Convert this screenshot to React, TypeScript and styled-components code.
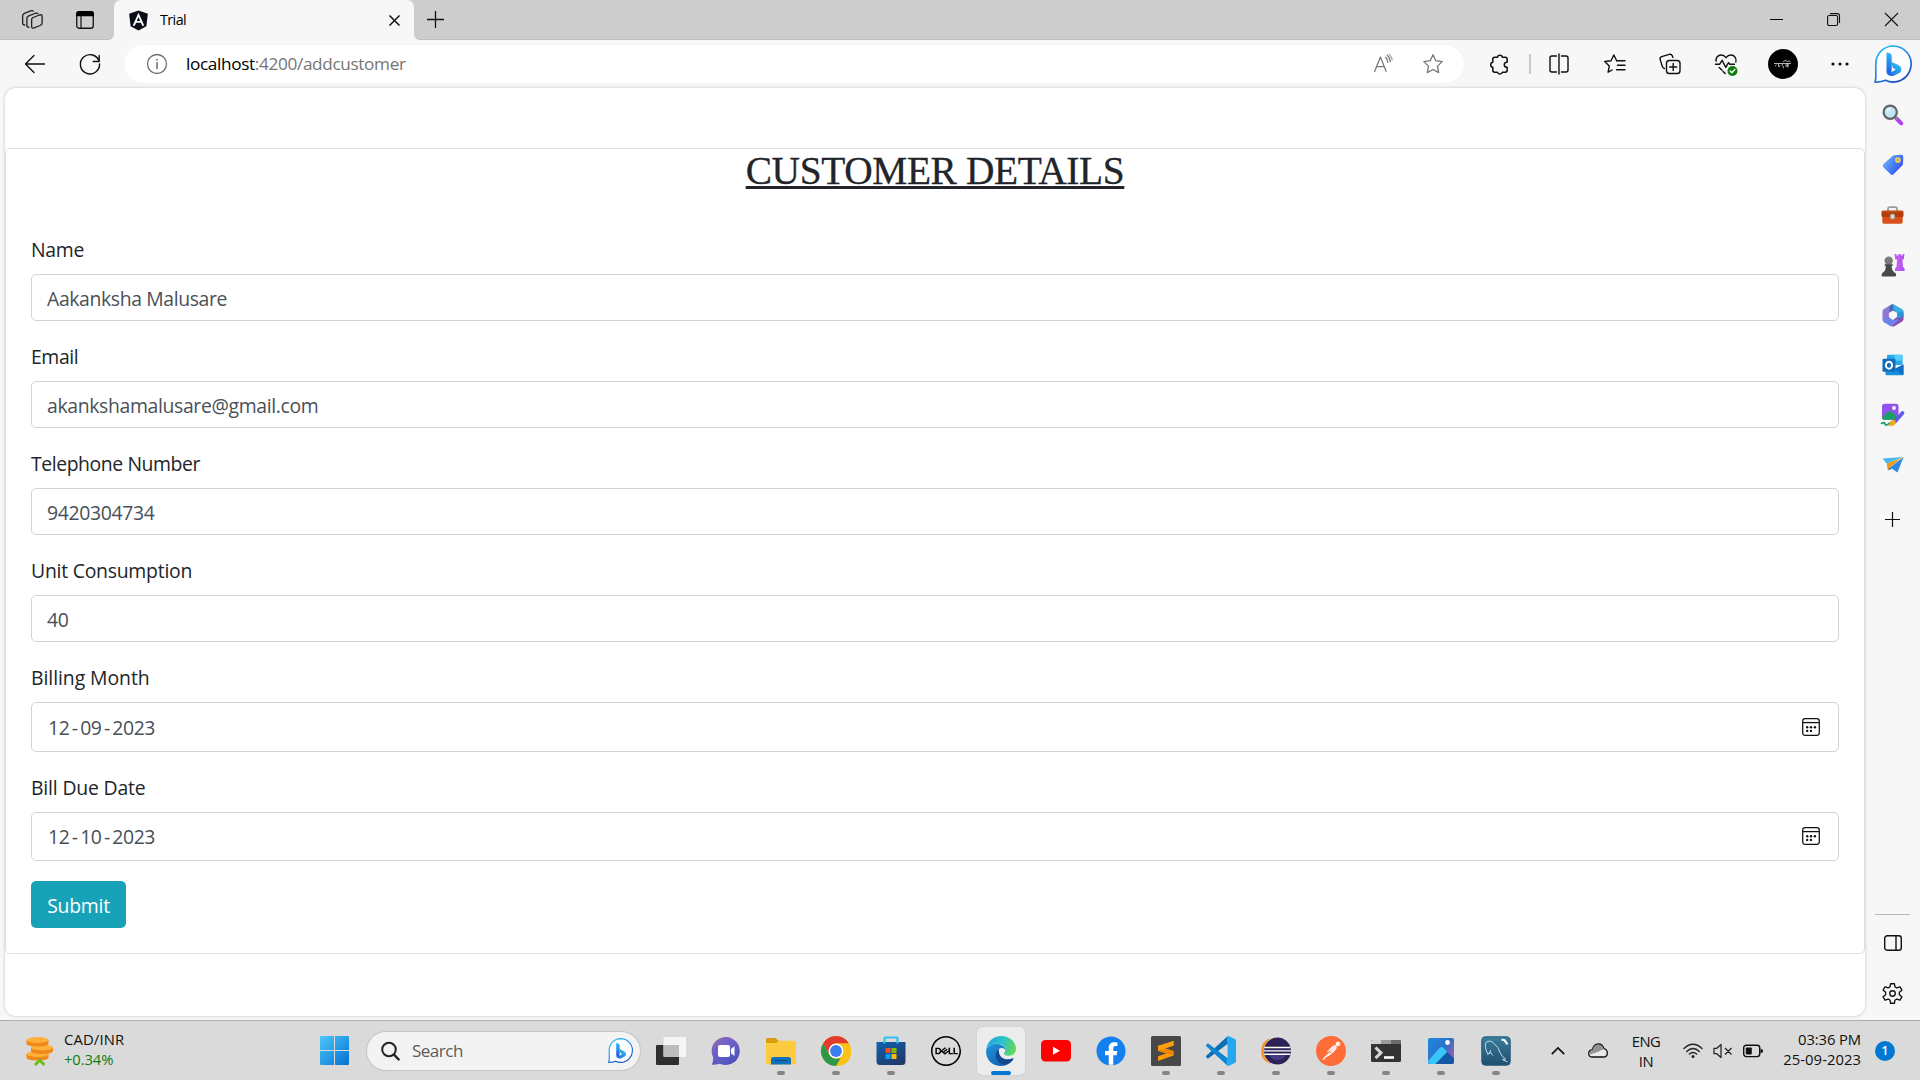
import React from "react";
import styled, { createGlobalStyle, css } from "styled-components";
import { FaAngular, FaFacebook } from "react-icons/fa";
import { SiDell, SiPostman } from "react-icons/si";

const GlobalStyle = createGlobalStyle`
  * { box-sizing: border-box; }
  html, body { margin: 0; padding: 0; overflow: hidden; }
  body { font-family: "Open Sans", "Noto Sans", sans-serif; color: #000; background: #f7f7f7; }
`;

/* ---------- window frame ---------- */

const Desktop = styled.div`
  width: 1920px;
  height: 1080px;
  display: flex;
  flex-direction: column;
  background: #f7f7f7;
  overflow: hidden;
`;

const TabStrip = styled.header`
  height: 40px;
  flex: none;
  display: flex;
  background: #f7f7f7;
`;

const StripPart = styled.div<{ $side: "left" | "right" }>`
  background: #cdcdcd;
  display: flex;
  align-items: center;
  border-bottom: 1px solid #bfbfbf;
  ${(p) =>
    p.$side === "left"
      ? css`width: 114px; padding-left: 17px; gap: 21px; border-bottom-right-radius: 6px;`
      : css`flex: 1; padding-left: 6px; border-bottom-left-radius: 6px;`}
`;

const StripSpacer = styled.div`
  flex: 1;
`;

const Caption = styled.div`
  width: 57.5px;
  height: 40px;
  display: grid;
  place-items: center;
`;

const TabBack = styled.div`
  width: 300px;
  background: #cdcdcd;
`;

const Tab = styled.div`
  width: 300px;
  height: 40px;
  display: flex;
  align-items: center;
  padding: 0 10px 0 13px;
  border-radius: 7px 7px 0 0;
  background: #f7f7f7;
`;

const TabIcon = styled.span`
  width: 22px;
  height: 22px;
  margin-right: 11px;
  color: #0b0d17;
  background: radial-gradient(circle at 50% 50%, #fff 0 6px, transparent 7px);
  display: grid;
  place-items: center;
`;

const TabTitle = styled.span`
  flex: 1;
  font-size: 14.4px;
  letter-spacing: -0.6px;
  line-height: 20px;
`;

const Slot = styled.div<{ $w?: number; $h?: number; $ml?: number }>`
  width: ${(p) => p.$w ?? 40}px;
  height: ${(p) => p.$h ?? 40}px;
  margin-left: ${(p) => p.$ml ?? 0}px;
  flex: none;
  display: grid;
  place-items: center;
`;

const Svg = styled.svg`
  display: block;
  overflow: visible;
`;

const Browser = styled.div`
  height: 980px;
  flex: none;
  display: flex;
`;

const Column = styled.div`
  width: 1865px;
  display: flex;
  flex-direction: column;
`;

const Toolbar = styled.div`
  height: 48px;
  flex: none;
  display: flex;
  align-items: center;
  padding-left: 15px;
`;

const AddressBar = styled.div`
  width: 1340px;
  height: 38px;
  margin-left: 14px;
  display: flex;
  align-items: center;
  padding: 0 6px 0 13px;
  border-radius: 19px;
  background: #fff;
  box-shadow: 0 0 2px rgba(0, 0, 0, 0.05);
`;

const Url = styled.span`
  flex: 1;
  margin-left: 9px;
  font-size: 17.2px;
  letter-spacing: -0.35px;
  line-height: 24px;
  color: #000;
  em { font-style: normal; color: #757575; }
`;

const Divider = styled.i`
  width: 1.5px;
  height: 20px;
  margin: 0 8.5px 0 10px;
  background: #cacaca;
`;

const Actions = styled.div`
  display: flex;
  align-items: center;
  gap: 15.5px;
`;

const Avatar = styled.div`
  width: 30px;
  height: 30px;
  border-radius: 50%;
  background: #000;
  display: grid;
  place-items: center;
`;

/* ---------- page ---------- */

const Page = styled.main`
  height: 928px;
  margin-left: 5px;
  width: 1860px;
  padding-top: 60px;
  border-radius: 11px;
  background: #fff;
  box-shadow: 0 0 3px rgba(0, 0, 0, 0.24);
`;

const Card = styled.section`
  height: 806px;
  border: 1px solid #dfdfdf;
  border-radius: 5px;
  background: #fff;
`;

const Heading = styled.h2`
  margin: 0;
  height: 85px;
  text-align: center;
  font-family: "Liberation Serif", serif;
  font-weight: 400;
  font-size: 39.4px;
  line-height: 44px;
  letter-spacing: -0.37px;
  color: #212529;
  text-decoration: underline;
  text-decoration-thickness: 3px;
  text-underline-offset: 2px;
  text-decoration-skip-ink: none;
  -webkit-text-stroke: 0.3px #212529;
`;

const Form = styled.form`
  padding: 0 25px;
`;

const Field = styled.div`
  display: flex;
  flex-direction: column;
  margin-bottom: 20px;
`;

const Label = styled.label<{ $ls?: number }>`
  height: 30px;
  margin-bottom: 10px;
  font-size: 19.4px;
  line-height: 31px;
  letter-spacing: ${(p) => p.$ls ?? -0.3}px;
  color: #212529;
`;

const controlStyle = css`
  border: 1px solid #ced4da;
  border-radius: 5px;
  background: #fff;
  font-family: inherit;
  font-size: 19.4px;
  color: #495057;
`;

const Input = styled.input<{ $ls?: number }>`
  ${controlStyle}
  height: 47px;
  padding: 1px 15px 0;
  letter-spacing: ${(p) => p.$ls ?? -0.35}px;
  outline: none;
`;

const DateControl = styled.div<{ $h: number }>`
  ${controlStyle}
  height: ${(p) => p.$h}px;
  display: flex;
  align-items: center;
  justify-content: space-between;
  padding: 0 18px 1px 16px;
`;

const DateText = styled.span`
  display: flex;
  gap: 2.5px;
  padding-top: 1px;
  letter-spacing: -0.42px;
`;

const Submit = styled.button`
  width: 95px;
  height: 47px;
  padding: 2px 0 0;
  border: 0;
  border-radius: 5px;
  background: #17a2b8;
  color: #fff;
  font-family: inherit;
  font-size: 19.4px;
  letter-spacing: -0.25px;
`;

/* ---------- side bar ---------- */

const SideBar = styled.aside`
  flex: 1;
  display: flex;
  flex-direction: column;
  align-items: center;
  padding: 1px 0 2px 0;
`;

const SideSpacer = styled.div`
  flex: 1;
`;

const SideList = styled.nav`
  padding-top: 3px;
`;

const SideRule = styled.i`
  width: 35px;
  height: 1px;
  margin-bottom: 3px;
  background: #b9b9b9;
`;

/* ---------- task bar ---------- */

const TaskBar = styled.footer`
  height: 60px;
  flex: none;
  display: flex;
  align-items: center;
  border-top: 1px solid #adadad;
  background: #dadada;
`;

const Widget = styled.div`
  width: 320px;
  padding-left: 25px;
  display: flex;
  align-items: center;
  gap: 9px;
`;

const Lines = styled.div<{ $align?: string; $ls?: number }>`
  display: flex;
  flex-direction: column;
  padding-bottom: 4px;
  text-align: ${(p) => p.$align ?? "left"};
  font-size: 14.8px;
  line-height: 20px;
  letter-spacing: ${(p) => p.$ls ?? 0}px;
  color: #111;
`;

const Gain = styled.span`
  color: #0f7b0f;
  letter-spacing: -0.1px;
`;

const SearchBox = styled.div`
  width: 273px;
  height: 38px;
  margin: 0 7px 0 18px;
  display: flex;
  align-items: center;
  padding: 0 7px 0 14px;
  border-radius: 19px;
  background: #f3f3f3;
  box-shadow: 0 0 1px 1px rgba(0, 0, 0, 0.1);
  font-size: 17px;
  letter-spacing: -0.5px;
  color: #5c5c5c;
  span { flex: 1; margin-left: 12px; }
`;

const Apps = styled.div`
  display: flex;
  gap: 7px;
`;

const AppTile = styled.div<{ $active?: boolean }>`
  position: relative;
  width: 48px;
  height: 48px;
  display: grid;
  place-items: center;
  border-radius: 5px;
  background: ${(p) => (p.$active ? "#ececec" : "transparent")};
  box-shadow: ${(p) => (p.$active ? "0 0 1px rgba(0,0,0,.25)" : "none")};
`;

const Indicator = styled.i<{ $active?: boolean }>`
  position: absolute;
  bottom: 0;
  width: ${(p) => (p.$active ? 20 : 8)}px;
  height: 4px;
  border-radius: 2px;
  background: ${(p) => (p.$active ? "#0078d4" : "#858585")};
`;

const Tray = styled.div`
  flex: 1;
  display: flex;
  align-items: center;
  padding: 0 25px 0 18px;
`;

const TraySpacer = styled.div`
  flex: 1;
`;

const Clock = styled(Lines)`
  span:first-child { letter-spacing: -0.1px; }
`;

const Badge = styled.span`
  width: 20px;
  height: 20px;
  margin-left: 14px;
  border-radius: 50%;
  background: #0078d4;
  color: #fff;
  font-size: 12px;
  font-weight: 600;
  line-height: 20px;
  text-align: center;
`;

/* ---------- line icons ---------- */

type LineProps = {
  s?: number;
  w?: number;
  color?: string;
  children: React.ReactNode;
};

const Line = ({ s = 24, w = 1.4, color = "#111", children }: LineProps) => (
  <Svg
    width={s}
    height={s}
    viewBox="0 0 24 24"
    fill="none"
    stroke={color}
    strokeWidth={w}
    strokeLinecap="round"
    strokeLinejoin="round"
  >
    {children}
  </Svg>
);

const Workspaces = () => (
  <Line s={30} w={1.05} color="#222">
    <path d="M12.2 9.3 17.700 7.100q2.200-.7 2.200 1v5.200q0 1.600-1.600 2.200l-4.800 1.900q-2 .7-2-1.100v-5q0-1.500.7-2z" transform="translate(.2 .9)" />
    <path d="M9.500 17.800q-1.600 0-1.600-1.600v-5.400q0-1.500 1.500-2.100l5.300-2.100q1.300-.4 2 .2" />
    <path d="M6.200 16q-1.700-.1-1.700-1.600V8.700q0-1.400 1.400-2l5-2q1.600-.5 2.200.2" />
  </Line>
);

const TabActions = () => (
  <Svg width={18} height={18} viewBox="0 0 18 18">
    <rect x=".75" y=".75" width="16.5" height="16.5" rx="2.6" fill="none" stroke="#111" strokeWidth="1.3" />
    <path d="M.1 5.300V3Q.1.100 3 .1h12Q17.900.1 17.900 3v2.300z" fill="#000" />
    <path d="M5 5v12" stroke="#111" strokeWidth="1.2" />
  </Svg>
);

const BingBubble = ({ size, id }: { size: number; id: string }) => (
  <Svg width={size} height={size} viewBox="0 0 38 38">
    <defs>
      <linearGradient id={`${id}a`} x1="0" y1="0" x2="0.6" y2="1">
        <stop offset="0" stopColor="#22c9f2" />
        <stop offset=".5" stopColor="#2b8ff0" />
        <stop offset="1" stopColor="#174fc4" />
      </linearGradient>
      <linearGradient id={`${id}b`} x1="0" y1="0" x2="0" y2="1">
        <stop offset="0" stopColor="#2fb8f6" />
        <stop offset="1" stopColor="#1a55dc" />
      </linearGradient>
      <linearGradient id={`${id}c`} x1="0" y1="1" x2="1" y2="0">
        <stop offset="0" stopColor="#1d5ce0" />
        <stop offset="1" stopColor="#2fd3f2" />
      </linearGradient>
    </defs>
    <path
      d="M19.300 1A18 18 0 1 1 11.500 35.300C8 36.900 4.500 37.200 1 37 2.100 34.500 2 31 1.800 26.500V18.500A17.700 17.700 0 0 1 19.300 1z"
      fill="#fdfdff"
      stroke={`url(#${id}a)`}
      strokeWidth="1.7"
    />
    <path d="M12.500 8.300q0-1.200 1.100-.8l2.800 1.100q1.300.7 1.300 2.400V25l-1.500 5.500q-3.700-.6-3.700-4.300z" fill={`url(#${id}b)`} />
    <path d="M13 26.500q1.500 2 4.500.5l4.400-2.600-2.100-1q-1-.6-1.300-1.600l-1.300-3.600q-.3-1.300 1-1l6.300 2.900q3 1.700 3 4.500 0 2.400-2.200 3.500l-5.500 2.700q-5.900 1.500-6.800-4.300z" fill={`url(#${id}c)`} />
  </Svg>
);

const ReadAloud = () => (
  <Line w={1.25} color="#767676">
    <path d="M3.600 19.500 9.400 5l5.800 14.500M5.600 14.600h7.600" />
    <path d="M14.600 5.300q1.900 1.800 2.200 5M16.200 3.300q2.800 2.400 3.200 6.400" />
    <path d="M18.200 2.200q2.500 2.400 3 6" opacity=".6" />
  </Line>
);

const starPath = "M12 2.800l2.800 5.900 6.400.9-4.700 4.500 1.200 6.500L12 17.500l-5.700 3.100 1.200-6.500L2.800 9.600l6.400-.9z";

const Puzzle = () => (
  <Line s={23} w={1.6}>
    <path d="M9.800 4.400a2.700 2.700 0 0 1 5.200 0H18a2 2 0 0 1 2 2v3.200h-.8a2.700 2.700 0 0 0 0 5.300h.8V18a2 2 0 0 1-2 2h-3a2.700 2.700 0 0 1-5.200 0H7a2 2 0 0 1-2-2v-3.100a2.700 2.700 0 0 1 0-5.300V6.400a2 2 0 0 1 2-2z" />
  </Line>
);

const SplitView = () => (
  <Line>
    <path d="M9.500 4H5Q3 4 3 6v12q0 2 2 2h4.500M14.500 4H19q2 0 2 2v12q0 2-2 2h-4.500" />
    <path d="M12 2v20" />
  </Line>
);

const Favorites = () => (
  <Line>
    <path d="M8 8.700l-6.300.8 4.600 4.400-1.200 6.300 4-2.200M8 8.700 10.800 3l2.900 5.700" />
    <path d="M13.700 8.700H22M14.500 13.200H22M13.500 17.700H22" />
  </Line>
);

const Collections = () => (
  <Line>
    <rect x="8.500" y="8.500" width="13.500" height="13" rx="2.800" />
    <path d="M15.200 11.500v7M11.700 15h7" />
    <path d="M6.300 16.500Q4.800 16 4.300 14.400L2.200 7.600Q1.600 5.400 3.700 4.600l7.600-2.300q2-.5 2.900 1.300l.7 1.900" />
  </Line>
);

const Heartbeat = () => (
  <Line>
    <path d="M2.100 9.200C1.600 5.700 4 3 7 3q3 0 5 2.700Q14 3 17 3c3.400 0 5.800 3.200 4.800 7" />
    <path d="M1.500 12.200h4.200l2.400-3.900 3.700 7 2.700-4.600 1.400 1.500h4.500" />
    <path d="M5.200 15.500l6 6" strokeDasharray="4 1.500" />
    <circle cx="18.500" cy="19" r="5" fill="#107c10" stroke="none" />
    <path d="M16.200 19l1.700 1.700 3-3.300" stroke="#fff" />
  </Line>
);

const AvatarMark = () => (
  <Svg width={20} height={12} viewBox="0 0 20 12" fill="none" stroke="#ddd" strokeWidth=".8">
    <path d="M1 5.500h17M2 8l1.500-1M5.500 5.500v3q1.600.8 1.600-1M9.500 5.500q-1 2.500.8 2.800v2M13 5.500v3q2 .5 2-3v4M10 4q2-3 4.500-.5 1.500-1.500 3 .4" />
  </Svg>
);

const Calendar = () => (
  <Svg width={18} height={18} viewBox="0 0 18 18" fill="none" stroke="#111" strokeWidth="1.250">
    <rect x=".7" y=".7" width="16.600" height="16.600" rx="2.500" />
    <path d="M1 4.600h16" strokeWidth="1.300" />
    <g fill="#111" stroke="none">
      <circle cx="5.200" cy="9.200" r="1.200" /><circle cx="9" cy="9.200" r="1.200" /><circle cx="12.900" cy="9.200" r="1.200" />
      <circle cx="5.200" cy="12.900" r="1.200" /><circle cx="9" cy="12.900" r="1.200" />
    </g>
  </Svg>
);

const Gear = () => (
  <Line s={23} w={1.4}>
    <path d="M10 1.800h4l.6 3.400q1 .4 1.900 1l3.300-1.200 2 3.500-2.700 2.200q.2 1.300 0 2.600l2.700 2.200-2 3.500-3.300-1.200q-.9.6-1.900 1l-.6 3.400h-4l-.6-3.400q-1-.4-1.900-1L4.200 19l-2-3.500 2.700-2.200q-.2-1.300 0-2.600L2.200 8.500l2-3.500 3.300 1.200q.9-.6 1.900-1z" />
    <circle cx="12" cy="12" r="2.900" />
  </Line>
);

/* ---------- side bar pictures ---------- */

const SideSearch = () => (
  <Svg width={22} height={22} viewBox="0 0 22 22">
    <path d="M14.500 14.500l4.800 4.800" stroke="#b43df2" strokeWidth="4" strokeLinecap="round" />
    <path d="M12.500 12.500l3 3" stroke="#8d8d8d" strokeWidth="2" />
    <circle cx="8.200" cy="8.200" r="6.600" fill="#c2e6f7" stroke="#636363" strokeWidth="2.200" />
    <path d="M5 7.500q1-3 4-3" stroke="#e8f8ff" strokeWidth="1.500" fill="none" />
  </Svg>
);

const SideTag = () => (
  <Svg width={22} height={22} viewBox="0 0 22 22">
    <defs>
      <linearGradient id="tag" x1="0" y1="0.200" x2="1" y2=".8">
        <stop offset="0" stopColor="#7cb8fb" /><stop offset=".6" stopColor="#3f74f8" /><stop offset="1" stopColor="#4540ee" />
      </linearGradient>
    </defs>
    <path d="M12.500 1.300 19.300.8q2 0 2 2l-.3 6.900q-.1 1-.8 1.700l-8.600 8.800q-1.500 1.400-3 0L1.300 13.200q-1.300-1.500 0-3L10.500 2q.8-.7 2-.7z" fill="url(#tag)" />
    <circle cx="15.900" cy="6" r="2" fill="#87a6d8" stroke="#ffd02e" strokeWidth="1.700" />
  </Svg>
);

const SideCase = () => (
  <Svg width={23} height={20} viewBox="0 0 23 20">
    <path d="M7 6V4q0-1.800 1.800-1.800h5.400Q16 2.200 16 4v2" fill="none" stroke="#9b9b9b" strokeWidth="1.700" />
    <rect x="1.300" y="9" width="20.400" height="9.700" rx="1.800" fill="#d9501c" />
    <rect x=".5" y="5.600" width="22" height="6.300" rx="1.500" fill="#b13c0b" />
    <path d="M1.500 6.800h20" stroke="#d0541c" strokeWidth="1" />
    <rect x="9.300" y="9" width="4.400" height="5" rx="1.700" fill="#d6d6d6" stroke="#999" strokeWidth=".6" />
  </Svg>
);

const SideChess = () => (
  <Svg width={24} height={24} viewBox="0 0 24 24">
    <path d="M13.500 1h2v1.500h2V1h2.400v1.500h1.700V1h1.900l-.8 5.500h-1.400l.6 7.300 1.600 1.800V18H14v-2.400l1.500-1.800.6-7.300h-1.800z" fill="#c15cf4" />
    <path d="M19.500 2.500h3.800l-.6 4h-1.400l.6 7.300 1.600 1.800V18h-4z" fill="#9d41ec" opacity=".35" />
    <circle cx="7.700" cy="7.800" r="4.200" fill="#7b7b7b" />
    <path d="M3.700 11.300h8q1 1.500-1.200 2 .2 3.700 2.400 5.700 2.500.8 2.300 3.200-.1 1.300-1.500 1.300H1.900Q.5 23.500.5 22.200q0-2.400 2.200-3.200 2.200-2 2.200-5.700-2.200-.5-1.200-2z" fill="#484848" />
  </Svg>
);

const Side365 = () => (
  <Svg width={22} height={24} viewBox="0 0 22 24">
    <path d="M9.300 1.600 1.900 5.900Q.5 6.700.5 8.300v8.500L6 18.500 11 12V1q-.9 0-1.700.6z" fill="#8f78d4" />
    <path d="M8 3.300 11 1l8.800 4.900q1.700.9 1.700 2.500v6L11 12z" fill="#3aaee0" />
    <path d="M11 1 7.500 3v8.500l4 1L14 9.500 11.500 6z" fill="#3564ae" opacity=".8" />
    <path d="M21.500 11v5.500q0 1.200-1.400 2.100l-7.700 4.600q-1.400.8-2.900 0L7.500 22l6-8z" fill="#8650ae" />
    <path d="M21.500 8.500v4.200L16 16l-2-4 2-2.500z" fill="#2f93dc" />
    <path d="M.5 16.500l5.300-2.600 5.300 3 5-1-.2 1.800-6 5.400q-1 .5-1.700 0l-6.300-3.800Q.5 18.200.5 16.500z" fill="#6c84e8" />
    <path d="M11 8l3.600 2v4L11 16l-3.600-2v-4z" fill="#f7f7f7" stroke="#f7f7f7" strokeLinejoin="round" />
  </Svg>
);

const SideOutlook = () => (
  <Svg width={22} height={22} viewBox="0 0 22 22">
    <path d="M5 1.500Q5 .7 6 .7h13.500q1 0 1 1V11H5z" fill="#28a8ea" />
    <path d="M12.500.7h7q1 0 1 1v5h-8z" fill="#50d0fb" />
    <path d="M5 6.500h8v7H5z" fill="#0a5fb4" />
    <path d="M3.500 10.500 12.500 15l9-4.500V20q0 1.200-1.200 1.200H4.700q-1.200 0-1.200-1.200z" fill="#1490df" />
    <path d="M21.500 10.500V20q0 1-.7 1.200L12.500 15z" fill="#0c70c4" />
    <rect x=".5" y="4.700" width="13" height="13" rx="1.300" fill="#0f6cbd" />
    <ellipse cx="7" cy="11.200" rx="3.100" ry="3.500" fill="none" stroke="#fff" strokeWidth="1.900" />
  </Svg>
);

const SideDrop = () => (
  <Svg width={25} height={24} viewBox="0 0 25 24">
    <rect x="2" y=".8" width="16.500" height="16" rx="2.500" fill="#9252ef" />
    <path d="M2 14.500 7.500 9q2.300-1.600 4.600 0l5 5q0 2.800-2.700 2.800H4.500Q2 16.800 2 14.500z" fill="#1aa064" />
    <circle cx="14" cy="5" r="1.900" fill="#fff" />
    <path d="M1.500 20.500q3-2 3.500.5t4-.5q1.500-1 2.500 1" fill="none" stroke="#179a5a" strokeWidth="1.600" strokeLinecap="round" />
    <path d="M15 18.500 22.500 10" stroke="#5f5ce9" strokeWidth="3.700" strokeLinecap="round" />
    <path d="M15.500 17.500l-3-.8-2.400 2.300q-.5 2.500-2 3.700 5 1.400 7.600-2z" fill="#f4a91b" />
  </Svg>
);

const SidePlane = () => (
  <Svg width={22} height={20} viewBox="0 0 22 20">
    <path d="M.5 3.500 21.500 2 4.800 8.800z" fill="#49b7ee" />
    <path d="M21.500 2 8 12.500l7.500 5z" fill="#2d87e6" />
    <path d="M4.800 8.800 21.500 2 7 11z" fill="#ffbf36" />
    <path d="M4.800 8.800 18 3.900 8 12.500 5.800 15.500z" fill="#ec9a15" />
    <path d="M8 12.500 5.800 15.500l4-1.800z" fill="#1b64bd" />
  </Svg>
);

/* ---------- task bar pictures ---------- */

const Coins = () => (
  <Svg width={30} height={30} viewBox="0 0 30 30">
    {[[12.5, 18], [17, 11.5], [12.5, 4]].map(([x, y]) => (
      <g key={y}>
        <path d={`M${x - 11} ${y}v3.500q0 3 11 3t11-3V${y}z`} fill="#ef8a1a" />
        <ellipse cx={x} cy={y} rx="11" ry="3" fill="#ffb03a" />
      </g>
    ))}
    <path d="M10 29l4.700-4.700 4.700 4.700" fill="none" stroke="#6cbf12" strokeWidth="3" />
  </Svg>
);

const StartLogo = () => (
  <Svg width={29} height={29} viewBox="0 0 29 29">
    <defs>
      <linearGradient id="win" gradientUnits="userSpaceOnUse" x1="0" y1="0" x2="29" y2="29">
        <stop offset="0" stopColor="#4cc8fb" /><stop offset="1" stopColor="#0470cf" />
      </linearGradient>
    </defs>
    <path d="M1 0h13v14H0V1q0-1 1-1zM15 0h13q1 0 1 1v13H15zM0 15h14v14H1q-1 0-1-1zM15 15h14v13q0 1-1 1H15z" fill="url(#win)" />
  </Svg>
);

const TaskView = () => (
  <Svg width={30} height={30} viewBox="0 0 30 30">
    <rect x="0" y="9" width="23" height="20" rx="1" fill="#2e2e2e" />
    <rect x="7.500" y="1" width="22.500" height="20" rx="1" fill="#fafafa" opacity=".82" />
    <path d="M7.500 9H23v12H8.500q-1 0-1-1z" fill="#bcbcbc" />
  </Svg>
);

const Chat = () => (
  <Svg width={30} height={30} viewBox="1 0 30 30">
    <defs>
      <linearGradient id="chat" x1="0" y1="0" x2=".7" y2="1">
        <stop offset="0" stopColor="#9a6aa8" /><stop offset=".4" stopColor="#6f62c9" /><stop offset="1" stopColor="#4c53b9" />
      </linearGradient>
    </defs>
    <path d="M15.900 1a14 14 0 1 1-6 26.700Q5 29 1.600 28.700 3.300 26 3.200 21.500A14 14 0 0 1 15.900 1z" fill="url(#chat)" />
    <rect x="8" y="9" width="12" height="12" rx="2" fill="#fff" />
    <path d="M21 13l3.500-2.800v9.800L21 17.200z" fill="#fff" />
  </Svg>
);

const Folder = () => (
  <Svg width={30} height={30} viewBox="0 0 30 30">
    <path d="M0 3.500Q0 2 1.500 2h8l3 2.800V10H0z" fill="#dd9a0b" />
    <path d="M0 7h10l2.500-2.200H28.500Q30 4.800 30 6v21q0 1.500-1.500 1.500h-27Q0 28.500 0 27z" fill="#fccb40" />
    <path d="M5 28.500v-5Q5 21 7.500 21h15q2.500 0 2.500 2.500v5z" fill="#1071bd" />
    <path d="M8.500 24.500h13" stroke="#0c4e8c" strokeWidth="1.200" />
  </Svg>
);

const Chrome = () => (
  <Svg width={30} height={30} viewBox="0 0 30 30">
    <circle cx="15" cy="15" r="15" fill="#fbc116" />
    <path d="M2 7.500A15 15 0 0 1 28 7.500H15L8.500 18.750z" fill="#e33b2e" />
    <path d="M2 7.500 8.500 18.750q2 3.500 6.500 3.750h6.500L15 30A15 15 0 0 1 2 7.500z" fill="#2c9848" />
    <path d="M21.500 18.750 15 30q15 0 15-15 0-4-2-7.500H15z" fill="#fbc116" />
    <circle cx="15" cy="15" r="7.500" fill="#fff" />
    <circle cx="15" cy="15" r="5.900" fill="#3b7ded" />
  </Svg>
);

const Store = () => (
  <Svg width={30} height={30} viewBox="0 0 30 30">
    <defs>
      <linearGradient id="store" x1="0" y1="0" x2=".7" y2="1">
        <stop offset="0" stopColor="#0e63af" /><stop offset="1" stopColor="#23386c" />
      </linearGradient>
    </defs>
    <path d="M8.500 8V2.500q0-1 1-1h11q1 0 1 1V8" fill="none" stroke="#2fc0f5" strokeWidth="2.200" />
    <path d="M.5 6h29v19.500q0 3.500-3.500 3.500H4Q.5 29 .5 25.500z" fill="url(#store)" />
    <path d="M8.500 6v1.500M21.500 6v1.500" stroke="#2fc0f5" strokeWidth="2.200" />
    <path d="M9.500 12h5v5h-5z" fill="#f25022" /><path d="M15.500 12h5v5h-5z" fill="#7fba00" />
    <path d="M9.500 18h5v5h-5z" fill="#00a4ef" /><path d="M15.500 18h5v5h-5z" fill="#ffb900" />
  </Svg>
);

const Edge = () => (
  <Svg width={30} height={30} viewBox="0 0 30 30">
    <defs>
      <linearGradient id="ed1" x1="0" y1=".3" x2="1" y2=".5">
        <stop offset="0" stopColor="#1fa6e0" /><stop offset=".55" stopColor="#2ec3c8" /><stop offset="1" stopColor="#63dc4e" />
      </linearGradient>
      <linearGradient id="ed2" x1="0" y1="0" x2=".6" y2="1">
        <stop offset="0" stopColor="#2393dd" /><stop offset="1" stopColor="#1269b8" />
      </linearGradient>
    </defs>
    <path d="M.3 13.500C1.200 5.500 7.500 0 15 0c8.500 0 15 6 15 12.800 0 4.200-3.200 7-7 7-3.700 0-5-1.400-5-2.200 0-.7 1.200-1.300 1.200-3.800 0-3-3-6-8-6C6 7.800 2 10 .3 13.500z" fill="url(#ed1)" />
    <path d="M.3 13.500C2 10 6 8 10.500 8c5.200 0 8.500 2.700 8.700 5.500q-1.400-1.700-3.700-1.500c-3.200.3-5.200 3.500-5 7 .2 5.500 4.500 9.500 8 10.400C8 32 .2 24.500.1 16z" fill="url(#ed2)" />
    <path d="M13 12.900c-2.300 1.300-3.500 3.900-3.300 6.600.4 5.300 4.600 9.200 8.800 9.900 4.200-.9 7.300-3.400 9-6.400.3-.7-.2-1-.8-.7-5.500 2.500-15 .7-13.700-9.400z" fill="#114a92" />
  </Svg>
);

const YouTube = () => (
  <Svg width={30} height={30} viewBox="0 0 30 30">
    <rect x="0" y="4" width="30" height="21.500" rx="4.500" fill="#f00" />
    <path d="M12 10.700v8l7-4z" fill="#fff" />
  </Svg>
);

const Sublime = () => (
  <Svg width={30} height={30} viewBox="0 0 30 30">
    <rect width="30" height="30" rx="1.500" fill="#484848" />
    <path d="M7 10 22.500 5v4.600l-8.300 2.900 8.300 2.500v4.500L7 25v-4.700l8.300-2.700L7 14.700z" fill="#ff9800" />
    <path d="M7 14.700V10l15.500 5v4.500z" fill="#f08600" />
    <path d="M7 10 22.500 5v4.600L7 14.700z" fill="#ff9f0f" />
  </Svg>
);

const VsCode = () => (
  <Svg width={30} height={30} viewBox="0 0 30 30">
    <path d="M22 22.500v-15L1.900 22.700.3 21.300q-.6-.8 0-1.600L21.500.3z" fill="#0a6fb5" />
    <path d="M22 7.500v15L1.900 7.300.3 8.700q-.6.8 0 1.600L21.500 29.800z" fill="#0e86d0" />
    <path d="M21.500.3Q22 0 23 .3l5.800 2.600Q30 3.500 30 5v20q0 1.500-1.200 2.100L23 29.700q-.8.300-1.500 0L20.500 28.600Q22 28.500 22 27V3q0-1.200-1.500-1.500z" fill="#25a7f2" />
  </Svg>
);

const Eclipse = () => (
  <Svg width={30} height={30} viewBox="0 0 30 30">
    <path d="M10.500 1.500Q0 5 0 15t10.500 13.500Q3 23 3 15t7.500-13.500z" fill="#f5962c" />
    <circle cx="16.500" cy="15" r="13.500" fill="#2c2255" />
    <path d="M8 19h17q-2.800 5-8.500 5T8 19z" fill="#443a86" />
    <path d="M3.200 11.500h26.300M3 14.900h27M3.200 18.200h26.300" stroke="#fff" strokeWidth="1.400" />
  </Svg>
);

const RoundLogo = styled.span<{ $color: string }>`
  width: 30px;
  height: 30px;
  display: grid;
  color: ${(p) => p.$color};
  background: radial-gradient(circle, #fff 0 13px, transparent 13.5px);
`;

const Terminal = () => (
  <Svg width={30} height={30} viewBox="0 0 30 30">
    <rect x="0" y="4" width="30" height="22" rx="1.500" fill="#333" />
    <path d="M1.500 4H10v4H0V5.500Q0 4 1.500 4z" fill="#cfcfcf" /><path d="M10 4h10v4H10z" fill="#9a9a9a" /><path d="M20 4h8.500Q30 4 30 5.500V8H20z" fill="#6b6b6b" />
    <path d="M4.500 11.500 10 16.800l-5.500 5.300" fill="none" stroke="#d6d6d6" strokeWidth="3" />
    <path d="M13 21.500h10" stroke="#fff" strokeWidth="2.600" />
  </Svg>
);

const Photos = () => (
  <Svg width={26} height={26} viewBox="0 0 26 26">
    <defs>
      <linearGradient id="ph" x1="0" y1="0" x2="1" y2=".7">
        <stop offset="0" stopColor="#1b8ae3" /><stop offset=".6" stopColor="#2f6fc6" /><stop offset="1" stopColor="#a25bb0" />
      </linearGradient>
    </defs>
    <rect width="26" height="26" rx="2" fill="url(#ph)" />
    <path d="M0 23.500 11.500 10.500q2-1.800 4 0L26 20.500V24q0 2-2 2H2q-2 0-2-2z" fill="#1558a6" />
    <path d="M0 23 11.500 10q2-1.800 4 0l3.800 3.700L7.500 26H2q-2 0-2-2z" fill="#38c6fa" />
    <circle cx="19.500" cy="4.500" r="2.400" fill="#fff" />
  </Svg>
);

const Workbench = () => (
  <Svg width={30} height={30} viewBox="0 0 30 30">
    <defs>
      <linearGradient id="wb" x1="0" y1="0" x2="0" y2="1">
        <stop offset="0" stopColor="#3a7d9d" /><stop offset="1" stopColor="#204f70" />
      </linearGradient>
    </defs>
    <rect x=".8" y=".8" width="28.400" height="28.400" rx="3.500" fill="url(#wb)" stroke="#235a79" strokeWidth="1" />
    <path d="M7 18.500Q3 11 5 6.500q4-3.500 8.500 1.500 4 3 5.500 8.500 1.500 4 5.500 6.500l-3 .5 5 2.500M7 18.500l2-2.500 3 3.500M8 18q1.500-2 1.500-4" fill="none" stroke="#c5dae4" strokeWidth="1" strokeLinejoin="round" />
    <path d="M20.500 3.500l3 .8 3 4" fill="none" stroke="#f2f7fa" strokeWidth="2.200" />
  </Svg>
);

const Cloud = () => (
  <Svg width={20} height={15} viewBox="0 0 20 15">
    <path d="M4.500 14Q.7 14 .7 10.500q0-3 3.600-3.800Q6 1 10.300 1q4.200 0 5.700 4.700 3.300.8 3.300 4.500 0 3.800-4 3.800z" fill="#e9e9e9" stroke="#111" strokeWidth="1.300" />
    <path d="M4.400 6.700Q6 1.500 10.300 1.500q4 0 5.400 4.500l-5.500 2.800L2 11.500Q1 8 4.400 6.700z" fill="#929292" />
  </Svg>
);

const Wifi = () => (
  <Svg width={20} height={16} viewBox="0 0 20 16" fill="none" stroke="#222" strokeWidth="1.400" strokeLinecap="round">
    <path d="M1 5.500q9-8.500 18 0M3.700 8.400q6.300-6 12.600 0M6.400 11.100q3.600-3.300 7.200 0" />
    <circle cx="10" cy="13.600" r="1.500" fill="#222" stroke="none" />
  </Svg>
);

const Volume = () => (
  <Svg width={20} height={16} viewBox="0 0 20 16" fill="none" stroke="#222" strokeWidth="1.250" strokeLinejoin="round">
    <path d="M1 5.300h2.800L8 1.500v13l-4.200-3.800H1zM12 5l6.500 6.500M18.500 5 12 11.500" />
  </Svg>
);

const Battery = () => (
  <Svg width={20} height={14} viewBox="0 0 20 14">
    <rect x=".7" y="1.200" width="16" height="11.400" rx="2.500" fill="none" stroke="#111" strokeWidth="1.400" />
    <rect x="2.800" y="3.400" width="6" height="7" rx=".8" fill="#111" />
    <path d="M17.500 4.500 20 6v2l-2.500 1.500z" fill="#111" />
  </Svg>
);

/* ---------- content ---------- */

const sideItems = [SideSearch, SideTag, SideCase, SideChess, Side365, SideOutlook, SideDrop, SidePlane];

const apps: { icon: React.ReactNode; open?: boolean; active?: boolean }[] = [
  { icon: <TaskView /> },
  { icon: <Chat /> },
  { icon: <Folder />, open: true },
  { icon: <Chrome />, open: true },
  { icon: <Store />, open: true },
  { icon: <SiDell size={30} /> },
  { icon: <Edge />, open: true, active: true },
  { icon: <YouTube /> },
  { icon: <RoundLogo $color="#1480f0"><FaFacebook size={30} /></RoundLogo> },
  { icon: <Sublime />, open: true },
  { icon: <VsCode />, open: true },
  { icon: <Eclipse />, open: true },
  { icon: <RoundLogo $color="#ff6c37"><SiPostman size={30} /></RoundLogo>, open: true },
  { icon: <Terminal />, open: true },
  { icon: <Photos />, open: true },
  { icon: <Workbench />, open: true },
];

const fields = [
  { id: "name", label: "Name", labelLs: -0.3, value: "Aakanksha Malusare", ls: -0.38 },
  { id: "email", label: "Email", labelLs: -0.42, value: "akankshamalusare@gmail.com", ls: -0.35 },
  { id: "phone", label: "Telephone Number", labelLs: -0.42, value: "9420304734", ls: -0.34 },
  { id: "units", label: "Unit Consumption", labelLs: -0.24, value: "40", ls: -0.3 },
];

const dates = [
  { label: "Billing Month", labelLs: -0.06, parts: ["12", "-", "09", "-", "2023"], h: 50 },
  { label: "Bill Due Date", labelLs: -0.17, parts: ["12", "-", "10", "-", "2023"], h: 49 },
];

export default function App() {
  return (
    <Desktop>
      <GlobalStyle />
      <TabStrip>
        <StripPart $side="left">
          <Workspaces />
          <Slot $w={34} $h={38}><TabActions /></Slot>
        </StripPart>
        <TabBack>
          <Tab>
            <TabIcon><FaAngular size={23} /></TabIcon>
            <TabTitle>Trial</TabTitle>
            <Slot $w={20} $h={20}>
              <Svg width={11} height={11} viewBox="0 0 11 11" stroke="#111" strokeWidth="1.500"><path d="M.5.5l10 10M10.500.5l-10 10" /></Svg>
            </Slot>
          </Tab>
        </TabBack>
        <StripPart $side="right">
          <Slot $w={30} $h={38}>
            <Svg width={17} height={17} viewBox="0 0 17 17" stroke="#111" strokeWidth="1.300"><path d="M8.500 0v17M0 8.500h17" /></Svg>
          </Slot>
          <StripSpacer />
          <Caption><Svg width={13} height={12} stroke="#000"><path d="M0 5.500h13" /></Svg></Caption>
          <Caption>
            <Svg width={13} height={13} viewBox="0 0 13 13" fill="none" stroke="#111" strokeWidth="1.100">
              <rect x=".6" y="2.500" width="10" height="10" rx="1.500" /><path d="M3 .6h7.500q2 0 2 2V10" />
            </Svg>
          </Caption>
          <Caption><Svg width={13} height={13} viewBox="0 0 13 13" stroke="#111" strokeWidth="1.100"><path d="M0 0l13 13M13 0 0 13" /></Svg></Caption>
        </StripPart>
      </TabStrip>

      <Browser>
        <Column>
          <Toolbar>
            <Slot><Line><path d="M21.500 12H2.500M11 3.500 2.500 12l8.500 8.500" /></Line></Slot>
            <Slot $ml={15}><Line><path d="M21.200 9.500A9.600 9.600 0 1 0 21.600 12M21.200 3.500v6h-6" /></Line></Slot>
            <AddressBar>
              <Slot>
                <Line color="#6f6f6f" w={1.3}><circle cx="12" cy="12" r="9.500" /><path d="M12 10.800v5.700M12 7.600v.3" strokeWidth="1.600" /></Line>
              </Slot>
              <Url>localhost<em>:4200/addcustomer</em></Url>
              <Slot $w={50}><ReadAloud /></Slot>
              <Slot $w={50}><Line color="#767676" w={1.300}><path d={starPath} /></Line></Slot>
            </AddressBar>
            <Slot $ml={15}><Puzzle /></Slot>
            <Divider />
            <Actions>
              <Slot><SplitView /></Slot>
              <Slot><Favorites /></Slot>
              <Slot><Collections /></Slot>
              <Slot><Heartbeat /></Slot>
              <Slot $ml={2}><Avatar><AvatarMark /></Avatar></Slot>
              <Slot $ml={1.5}>
                <Svg width={18} height={4} fill="#111"><circle cx="2" cy="2" r="1.600" /><circle cx="9" cy="2" r="1.600" /><circle cx="16" cy="2" r="1.600" /></Svg>
              </Slot>
            </Actions>
          </Toolbar>

          <Page>
            <Card>
              <Heading>CUSTOMER DETAILS</Heading>
              <Form>
                {fields.map((f) => (
                  <Field key={f.id}>
                    <Label htmlFor={f.id} $ls={f.labelLs}>{f.label}</Label>
                    <Input id={f.id} defaultValue={f.value} $ls={f.ls} />
                  </Field>
                ))}
                {dates.map((d) => (
                  <Field key={d.label}>
                    <Label $ls={d.labelLs}>{d.label}</Label>
                    <DateControl $h={d.h}>
                      <DateText>{d.parts.map((part, i) => <span key={i}>{part}</span>)}</DateText>
                      <Calendar />
                    </DateControl>
                  </Field>
                ))}
                <Submit type="button">Submit</Submit>
              </Form>
            </Card>
          </Page>
        </Column>

        <SideBar>
          <Slot $w={50} $h={46}><BingBubble size={38} id="bingTop" /></Slot>
          <SideList>
            {sideItems.map((Item, i) => (
              <Slot key={i} $w={50} $h={50}><Item /></Slot>
            ))}
          </SideList>
          <Slot $w={50} $h={59}>
            <Svg width={15} height={15} stroke="#111" strokeWidth="1.200"><path d="M7.500 0v15M0 7.500h15" /></Svg>
          </Slot>
          <SideSpacer />
          <SideRule />
          <Slot $w={50} $h={50}>
            <Svg width={18} height={16} viewBox="0 0 18 16" fill="none" stroke="#111" strokeWidth="1.400">
              <rect x=".7" y=".7" width="16.600" height="14.600" rx="2.600" /><path d="M12 .7v14.600" />
            </Svg>
          </Slot>
          <Slot $w={50} $h={50}><Gear /></Slot>
        </SideBar>
      </Browser>

      <TaskBar>
        <Widget>
          <Coins />
          <Lines $ls={0.15}><span>CAD/INR</span><Gain>+0.34%</Gain></Lines>
        </Widget>
        <StartLogo />
        <SearchBox>
          <Svg width={19} height={20} viewBox="0 0 19 20" fill="none" stroke="#222" strokeWidth="2" strokeLinecap="round">
            <circle cx="8" cy="8.500" r="6.800" /><path d="M13 13.700l4.700 4.800" strokeWidth="2.400" />
          </Svg>
          <span>Search</span>
          <BingBubble size={25} id="bingSearch" />
        </SearchBox>
        <Apps>
          {apps.map((a, i) => (
            <AppTile key={i} $active={a.active}>
              {a.icon}
              {a.open && <Indicator $active={a.active} />}
            </AppTile>
          ))}
        </Apps>
        <Tray>
          <Slot><Svg width={14} height={8} fill="none" stroke="#111" strokeWidth="1.700"><path d="M.8 7.200 7 1l6.200 6.200" /></Svg></Slot>
          <Slot><Cloud /></Slot>
          <Slot $w={56}><Lines $align="center" $ls={-0.5}><span>ENG</span><span>IN</span></Lines></Slot>
          <Slot $w={30} $ml={4}><Wifi /></Slot>
          <Slot $w={30}><Volume /></Slot>
          <Slot $w={30}><Battery /></Slot>
          <TraySpacer />
          <Clock $align="right" $ls={0.05}><span>03:36 PM</span><span>25-09-2023</span></Clock>
          <Badge>1</Badge>
        </Tray>
      </TaskBar>
    </Desktop>
  );
}
